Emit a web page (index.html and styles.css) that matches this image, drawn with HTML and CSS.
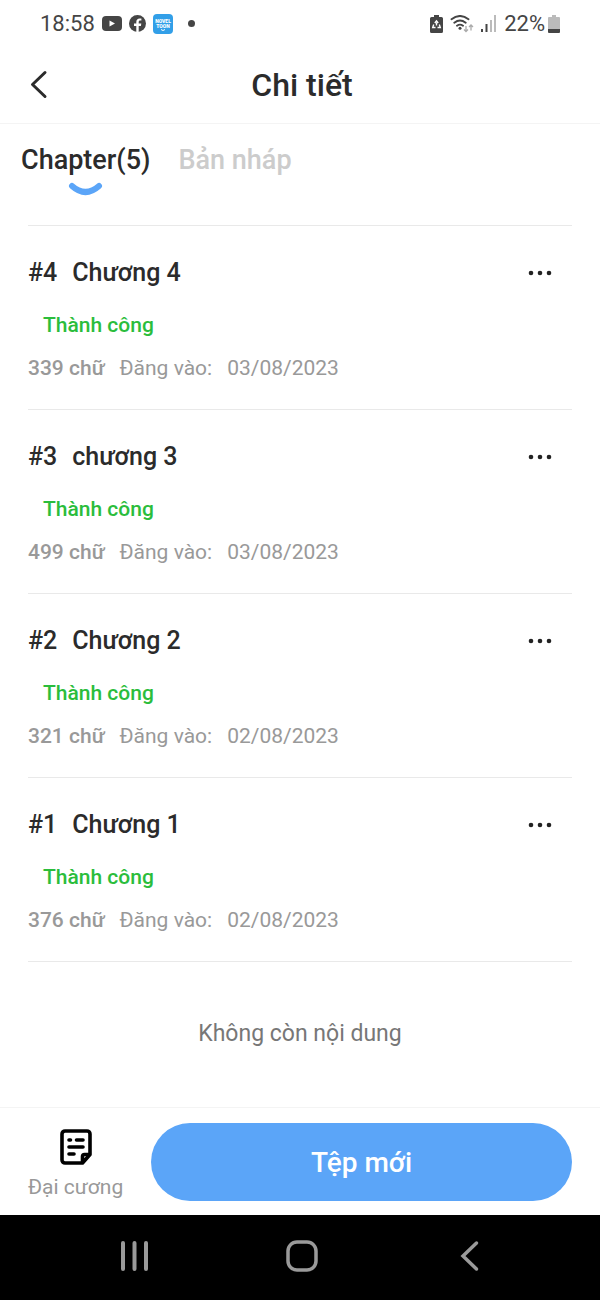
FILE: index.html
```html
<!DOCTYPE html>
<html lang="vi">
<head>
<meta charset="utf-8">
<meta name="viewport" content="width=device-width, initial-scale=1">
<title>Chi tiết</title>
<link rel="stylesheet" href="styles.css">
</head>
<body>
<div class="app">
  <div class="statusbar">
    <div class="status-left">
      <span class="clock">18:58</span>
      <svg width="20" height="15" viewBox="0 0 20 15" aria-hidden="true"><rect width="20" height="15" rx="4" fill="#454545"/><path d="M7.500 4.500v6l5.500-3z" fill="#fff"/></svg>
      <svg width="17" height="17" viewBox="0 0 17 17" aria-hidden="true"><circle cx="8.500" cy="8.500" r="8.500" fill="#454545"/><path d="M7.300 17v-6H5V8.600h2.300V7c0-2.300 1.300-3.600 3.400-3.600.9 0 1.700.1 1.700.1v2h-1.200c-1.100 0-1.500.7-1.500 1.400v1.700h2.600l-.4 2.400H9.700v6z" fill="#fff"/></svg>
      <svg width="20" height="20" viewBox="0 0 20 20" aria-hidden="true"><rect width="20" height="20" rx="4" fill="#329fe8"/><text class="logo-text" x="10" y="9" text-anchor="middle">NOVEL</text><text class="logo-text" x="10" y="14" text-anchor="middle">TOON</text><path d="M8 15.500q2 2 4 0" fill="none" stroke="#fff"/></svg>
      <span class="notice-dot"></span>
    </div>
    <div class="status-right">
      <svg width="13" height="18" viewBox="0 0 13 18" aria-hidden="true"><path d="M4 0h5v2h2.500A1.500 1.500 0 0 1 13 3.500v13a1.500 1.500 0 0 1-1.500 1.500h-10A1.500 1.500 0 0 1 0 16.500v-13A1.500 1.500 0 0 1 1.500 2H4z" fill="#454545"/><path d="M4.800 8l1.700-2.200L8.200 8M9.300 9.500l1 3H7.500M5.500 12.500H2.700l1-3M6.500 7.500v3" fill="none" stroke="#fff" stroke-width="1.400"/></svg>
      <svg width="24" height="18" viewBox="0 0 24 18" aria-hidden="true"><g fill="none" stroke="#454545" stroke-width="1.900" stroke-linecap="round"><path d="M1.500 4.200q8.500-6.500 17 0M4.300 7.700q5.700-4.500 11.400 0M7 10.700q3-2.200 6 0"/></g><circle cx="10" cy="13.300" r="1.500" fill="#454545"/><path d="M16 11v5.500m-2-2l2 2 2-2M21 15.500V10m-2 2l2-2 2 2" fill="none" stroke="#aaa" stroke-width="1.300"/></svg>
      <svg width="16" height="17" viewBox="0 0 16 17" aria-hidden="true"><path d="M0 14h2v3H0zM4.500 9h2v8h-2z" fill="#454545"/><path d="M9 5h2v12H9zM13 0h2v17h-2z" fill="#bbb"/></svg>
      <span class="battery-text">22%</span>
      <svg width="12" height="18" viewBox="0 0 12 18" aria-hidden="true"><path d="M4 0h4v2h3a1 1 0 0 1 1 1v11H0V3a1 1 0 0 1 1-1h3z" fill="#bbb"/><path d="M0 14h12v3a1 1 0 0 1-1 1H1a1 1 0 0 1-1-1z" fill="#454545"/></svg>
    </div>
  </div>

  <header class="header">
    <button class="back" aria-label="Quay lại"><svg width="18" height="30" viewBox="0 0 18 30"><path d="M15 2.500L2.500 14.500l12.500 12" fill="none" stroke="#2b2b2b" stroke-width="3" stroke-linecap="round" stroke-linejoin="round"/></svg></button>
    <h1 class="title">Chi tiết</h1>
  </header>

  <nav class="tabs">
    <button class="tab tab-active">Chapter(5)<svg width="36" height="14" viewBox="0 0 36 14" aria-hidden="true"><path d="M4 4q13.500 12 27 0" fill="none" stroke="#5ba5f8" stroke-width="6" stroke-linecap="round"/></svg></button>
    <button class="tab">Bản nháp</button>
  </nav>

  <main class="content">
    <ul class="chapters">
      <li class="chapter">
        <div class="chapter-head"><h2 class="chapter-title"><span>#4</span><span>Chương 4</span></h2><button class="more" aria-label="Thêm"><svg width="24" height="6" viewBox="0 0 24 6"><g fill="#222"><circle cx="3" cy="3" r="2.300"/><circle cx="12" cy="3" r="2.300"/><circle cx="21" cy="3" r="2.300"/></g></svg></button></div>
        <p class="state">Thành công</p>
        <p class="meta"><span class="words">339 chữ</span><span>Đăng vào:</span><time datetime="2023-08-03">03/08/2023</time></p>
      </li>
      <li class="chapter">
        <div class="chapter-head"><h2 class="chapter-title"><span>#3</span><span>chương 3</span></h2><button class="more" aria-label="Thêm"><svg width="24" height="6" viewBox="0 0 24 6"><g fill="#222"><circle cx="3" cy="3" r="2.300"/><circle cx="12" cy="3" r="2.300"/><circle cx="21" cy="3" r="2.300"/></g></svg></button></div>
        <p class="state">Thành công</p>
        <p class="meta"><span class="words">499 chữ</span><span>Đăng vào:</span><time datetime="2023-08-03">03/08/2023</time></p>
      </li>
      <li class="chapter">
        <div class="chapter-head"><h2 class="chapter-title"><span>#2</span><span>Chương 2</span></h2><button class="more" aria-label="Thêm"><svg width="24" height="6" viewBox="0 0 24 6"><g fill="#222"><circle cx="3" cy="3" r="2.300"/><circle cx="12" cy="3" r="2.300"/><circle cx="21" cy="3" r="2.300"/></g></svg></button></div>
        <p class="state">Thành công</p>
        <p class="meta"><span class="words">321 chữ</span><span>Đăng vào:</span><time datetime="2023-08-02">02/08/2023</time></p>
      </li>
      <li class="chapter">
        <div class="chapter-head"><h2 class="chapter-title"><span>#1</span><span>Chương 1</span></h2><button class="more" aria-label="Thêm"><svg width="24" height="6" viewBox="0 0 24 6"><g fill="#222"><circle cx="3" cy="3" r="2.300"/><circle cx="12" cy="3" r="2.300"/><circle cx="21" cy="3" r="2.300"/></g></svg></button></div>
        <p class="state">Thành công</p>
        <p class="meta"><span class="words">376 chữ</span><span>Đăng vào:</span><time datetime="2023-08-02">02/08/2023</time></p>
      </li>
    </ul>
    <p class="end">Không còn nội dung</p>
  </main>

  <footer class="actions">
    <button class="outline">
      <svg width="32" height="36" viewBox="0 0 32 36" aria-hidden="true"><g fill="none" stroke="#000" stroke-width="3.600" stroke-linecap="round" stroke-linejoin="round"><path d="M22.500 34H5a3 3 0 0 1-3-3V5a3 3 0 0 1 3-3h22a3 3 0 0 1 3 3v20.500zM22.500 34v-6.500a2 2 0 0 1 2-2H30"/><path d="M9 11h1.500M16.500 11H23M9 18h14M9 25h5"/></g></svg>
      <span>Đại cương</span>
    </button>
    <button class="primary">Tệp mới</button>
  </footer>

  <nav class="sysnav">
    <button class="sys" aria-label="Gần đây"><svg width="30" height="32" viewBox="0 0 30 32"><path d="M3 3v26M14.500 3v26M26 3v26" stroke="#9a9a9a" stroke-width="4" stroke-linecap="round"/></svg></button>
    <button class="sys" aria-label="Trang chủ"><svg width="32" height="32" viewBox="0 0 32 32"><rect x="2" y="2" width="28" height="28" rx="9" fill="none" stroke="#9a9a9a" stroke-width="3.500"/></svg></button>
    <button class="sys" aria-label="Trở lại"><svg width="20" height="32" viewBox="0 0 20 32"><path d="M17.500 3L4 16l13.500 13" fill="none" stroke="#9a9a9a" stroke-width="3.500" stroke-linecap="round"/></svg></button>
  </nav>
</div>
</body>
</html>
```
FILE: styles.css
```css
* {
  box-sizing: border-box;
}

body,
h1,
h2,
p,
ul {
  margin: 0;
  padding: 0;
}

body {
  background: #fff;
  color: #2b2b2b;
  font-family: Roboto, "Noto Sans", sans-serif;
}

button {
  border: 0;
  padding: 0;
  background: none;
  color: inherit;
  font: inherit;
  cursor: pointer;
}

svg {
  display: block;
  flex: none;
}

.app {
  display: flex;
  flex-direction: column;
  min-height: 100vh;
}

.statusbar {
  display: flex;
  justify-content: space-between;
  align-items: center;
  height: 47px;
  padding: 0 40px;
  color: #454545;
  font-size: 22px;
}

.status-left,
.status-right {
  display: flex;
  align-items: center;
}

.status-left {
  gap: 7px;
}

.status-right {
  gap: 7px;
}

.battery-text {
  margin-right: -4px;
}

.logo-text {
  fill: #fff;
  font-size: 5px;
  font-weight: 900;
}

.notice-dot {
  width: 7px;
  height: 7px;
  margin-left: 8px;
  border-radius: 50%;
  background: #454545;
}

.header {
  display: grid;
  grid-template-columns: 48px 1fr 48px;
  align-items: center;
  height: 77px;
  padding: 0 26px 0 30px;
  border-bottom: 1px solid #f4f4f4;
}

.back {
  justify-self: start;
}

.title {
  font-size: 32px;
  font-weight: 500;
  line-height: 40px;
  text-align: center;
}

.tabs {
  display: flex;
  align-items: flex-start;
  gap: 28px;
  padding: 20px 21px 29px;
}

.tab {
  display: flex;
  flex-direction: column;
  align-items: center;
  gap: 6px;
  color: #ccc;
  font-size: 27px;
  font-weight: 500;
  line-height: 32px;
}

.tab-active {
  color: #2b2b2b;
}

.content {
  flex: 1;
  padding: 0 28px;
}

.chapters {
  list-style: none;
  border-top: 1px solid #e9e9e9;
}

.chapter {
  padding: 31px 0 27px;
  border-bottom: 1px solid #e9e9e9;
}

.chapter-head {
  display: flex;
  justify-content: space-between;
  align-items: center;
  padding-right: 20px;
}

.chapter-title {
  display: flex;
  gap: 15px;
  font-size: 25px;
  font-weight: 500;
  line-height: 32px;
}

.state {
  margin: 22px 0 15px;
  padding-left: 15px;
  color: #2bbd3c;
  font-size: 21px;
  font-weight: 500;
  line-height: 28px;
}

.meta {
  display: flex;
  gap: 15px;
  color: #999;
  font-size: 21px;
  line-height: 28px;
}

.words {
  font-weight: 500;
}

.end {
  padding: 56px 0;
  color: #777;
  font-size: 23px;
  line-height: 32px;
  text-align: center;
}

.actions {
  display: flex;
  align-items: flex-end;
  gap: 28px;
  padding: 15px 28px 14px;
  border-top: 1px solid #f4f4f4;
}

.outline {
  display: flex;
  flex-direction: column;
  align-items: center;
  gap: 8px;
  color: #999;
  font-size: 21px;
  line-height: 28px;
}

.primary {
  flex: 1;
  height: 78px;
  border-radius: 39px;
  background: #5ba5f8;
  color: #fff;
  font-size: 28px;
  font-weight: 500;
}

.sysnav {
  display: grid;
  grid-template-columns: repeat(3, 1fr);
  align-items: center;
  height: 85px;
  padding: 0 48px 3px 52px;
  background: #000;
}

.sys {
  display: flex;
  justify-content: center;
}
```
